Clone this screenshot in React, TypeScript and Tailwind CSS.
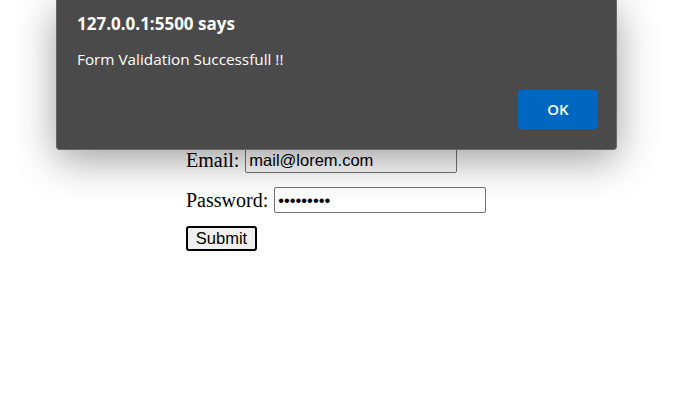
import React from 'react';

const serif = { fontFamily: '"Liberation Serif", "Times New Roman", serif' };

export default function App() {
  return (
    <div className="relative w-[675px] h-[412px] bg-white overflow-hidden">
      {/* Page form (behind the alert) */}
      <form
        className="flex flex-col gap-[14px] pl-[186px] pt-[107px] text-[20px] text-black"
        style={serif}
        onSubmit={(e) => e.preventDefault()}
      >
        <div className="flex items-center gap-[6px] h-[26px]">
          <span>Name:</span>
          <input
            type="text"
            defaultValue="Lorem"
            className="w-[212px] h-[26px] border border-[#767676] rounded-[2px] px-[3px] text-[16.5px] font-['Liberation_Sans',Arial,sans-serif]"
          />
        </div>
        <div className="flex items-center gap-[6px] h-[26px]">
          <span>Email:</span>
          <input
            type="email"
            defaultValue="mail@lorem.com"
            className="w-[212px] h-[26px] border border-[#767676] rounded-[2px] px-[3px] text-[16.5px] font-['Liberation_Sans',Arial,sans-serif]"
          />
        </div>
        <div className="flex items-center gap-[6px] h-[26px]">
          <span>Password:</span>
          <input
            type="password"
            defaultValue="123456789"
            className="w-[212px] h-[26px] border border-[#767676] rounded-[2px] px-[3px] text-[16.5px] font-['Liberation_Sans',Arial,sans-serif]"
          />
        </div>
        <div className="-mt-[5px]">
          <button
            type="submit"
            className="w-[71px] h-[25px] border-2 border-black rounded-[3px] bg-[#efefef] text-[16.5px] leading-none text-black font-['Liberation_Sans',Arial,sans-serif]"
          >
            Submit
          </button>
        </div>
      </form>

      {/* Browser alert dialog */}
      <div className="absolute left-[56px] top-0 w-[561px] h-[150px] bg-[#4a4a4a] border border-[#6a6a6a] border-t-0 rounded-b-[4px] shadow-[0_10px_40px_rgba(0,0,0,0.38)] font-['Open_Sans','Noto_Sans',sans-serif] text-white">
        <div className="flex flex-col h-full pl-[20px] pr-[18px] pt-[13px]">
          <div className="text-[17px] font-bold leading-[22px]">127.0.0.1:5500 says</div>
          <div className="mt-[14px] text-[15.3px] leading-[20px]">Form Validation Successfull !!</div>
          <div className="flex justify-end mt-[21px]">
            <button className="w-[80px] h-[39px] rounded-[4px] bg-[#0067c0] text-[15px] font-semibold text-white">
              OK
            </button>
          </div>
        </div>
      </div>
    </div>
  );
}
